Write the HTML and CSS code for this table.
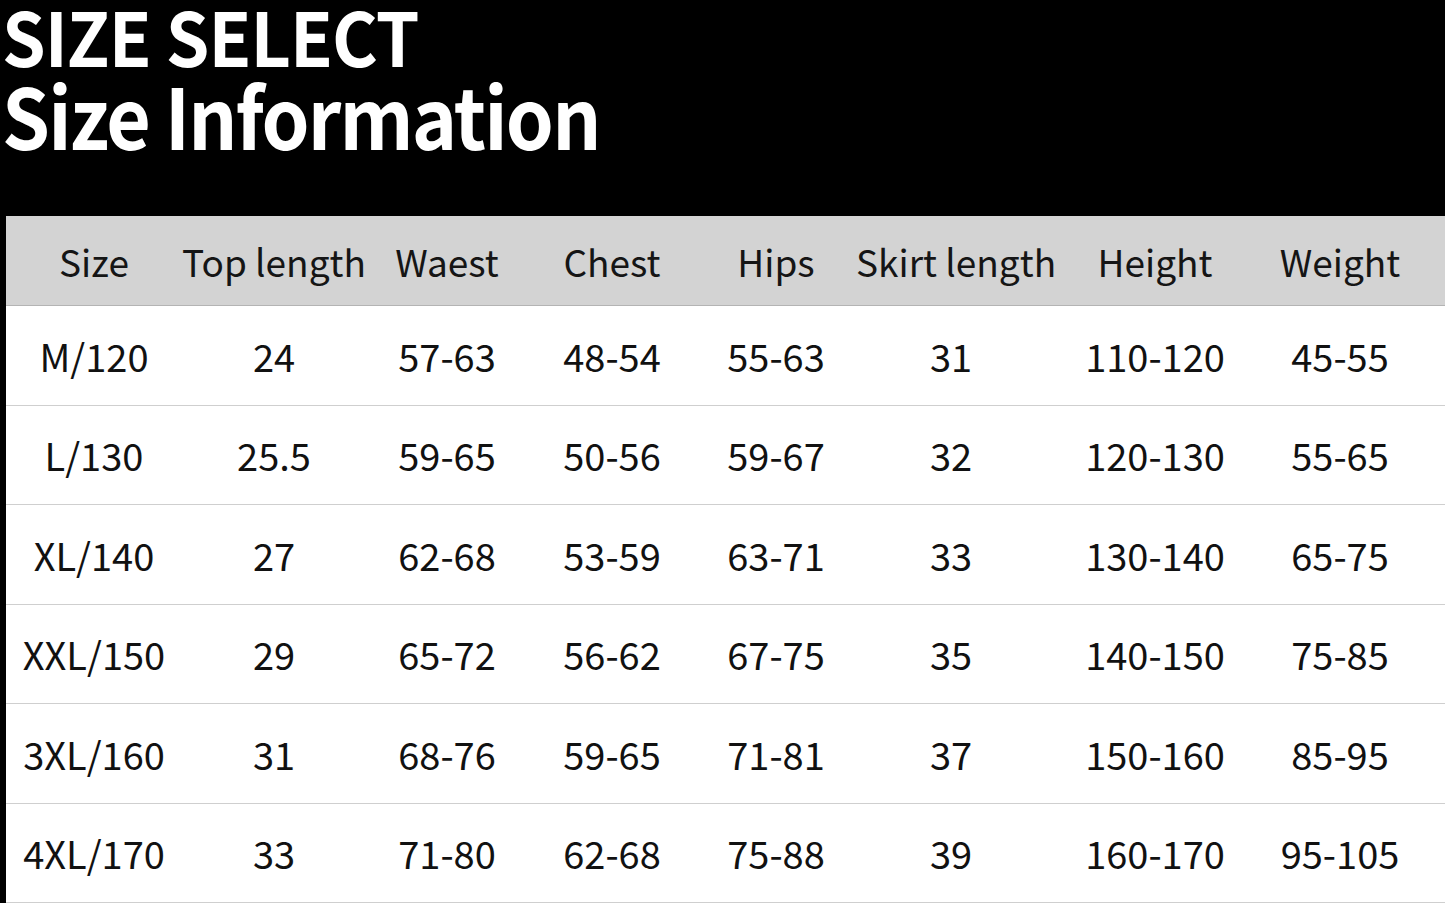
FILE: index.html
```html
<!DOCTYPE html>
<html lang="en">
<head>
<meta charset="utf-8">
<title>Size Select</title>
<link rel="stylesheet" href="styles.css">
</head>
<body>
<div class="page">
  <header class="hero">
    <div class="t1">SIZE SELECT</div>
    <div class="t2">Size Information</div>
  </header>
  <div class="table">
    <div class="row head">
      <div>Size</div><div>Top length</div><div>Waest</div><div>Chest</div><div>Hips</div><div>Skirt length</div><div>Height</div><div>Weight</div>
    </div>
    <div class="row"><div>M/120</div><div>24</div><div>57-63</div><div>48-54</div><div>55-63</div><div>31</div><div>110-120</div><div>45-55</div></div>
    <div class="row"><div>L/130</div><div>25.5</div><div>59-65</div><div>50-56</div><div>59-67</div><div>32</div><div>120-130</div><div>55-65</div></div>
    <div class="row"><div>XL/140</div><div>27</div><div>62-68</div><div>53-59</div><div>63-71</div><div>33</div><div>130-140</div><div>65-75</div></div>
    <div class="row"><div>XXL/150</div><div>29</div><div>65-72</div><div>56-62</div><div>67-75</div><div>35</div><div>140-150</div><div>75-85</div></div>
    <div class="row"><div>3XL/160</div><div>31</div><div>68-76</div><div>59-65</div><div>71-81</div><div>37</div><div>150-160</div><div>85-95</div></div>
    <div class="row"><div>4XL/170</div><div>33</div><div>71-80</div><div>62-68</div><div>75-88</div><div>39</div><div>160-170</div><div>95-105</div></div>
  </div>
</div>
</body>
</html>
```

FILE: styles.css
```css
html, body {
  margin: 0;
  padding: 0;
  background: #000;
}
.page {
  width: 1445px;
  height: 903px;
  overflow: hidden;
  display: flex;
  flex-direction: column;
  background: #000;
  font-family: "Noto Sans CJK SC", "Noto Sans", sans-serif;
}
.hero {
  height: 216px;
  flex: none;
  padding-left: 2px;
  color: #fff;
  font-weight: 700;
  box-sizing: border-box;
}
.t1 {
  font-size: 74px;
  line-height: 70px;
  letter-spacing: -1px;
  transform: scaleX(0.945);
  transform-origin: left center;
  width: max-content;
}
.t2 {
  font-size: 84px;
  line-height: 87px;
  letter-spacing: -2px;
  transform: scaleX(0.915);
  transform-origin: left center;
  width: max-content;
}
.table {
  flex: 1;
  display: flex;
  flex-direction: column;
  margin-left: 6px;
  background: #fff;
}
.row {
  flex: 1;
  display: grid;
  grid-template-columns: 176px 184px 162px 168px 160px 190px 218px 152px;
  padding-right: 29px;
  align-items: center;
  border-bottom: 1px solid #cfcfcf;
  color: #111;
  font-size: 38px;
  font-weight: 400;
  background: #fff;
}
.row > div {
  text-align: center;
  white-space: nowrap;
}
.row.head {
  flex: 0 0 90px;
  box-sizing: border-box;
  background: #d3d3d3;
  border-bottom: 1px solid #b4b4b4;
  color: #151515;
  font-size: 37px;
}
```
